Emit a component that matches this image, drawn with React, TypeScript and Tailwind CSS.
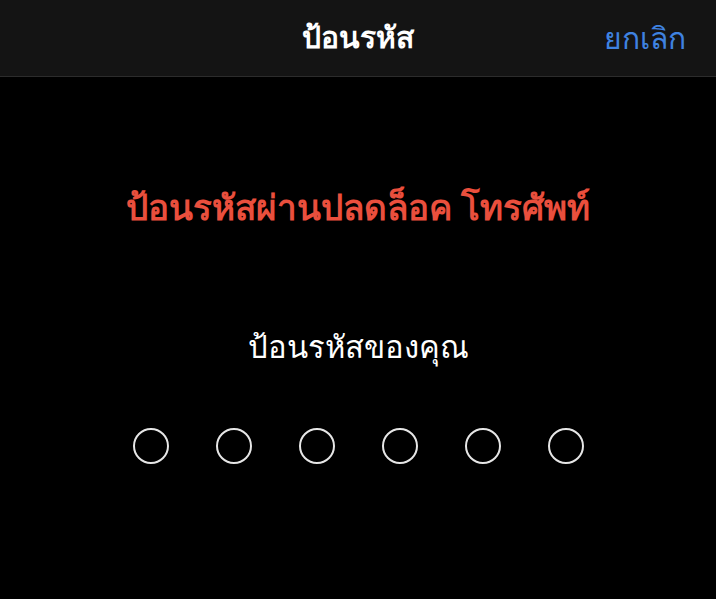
import React from 'react';

const App = () => {
  const dots = [0, 1, 2, 3, 4, 5];

  return (
    <div className="w-[716px] h-[599px] bg-black flex flex-col font-['Noto_Sans',sans-serif]">
      {/* Nav bar */}
      <header className="relative h-[77px] shrink-0 bg-[#141414] border-b border-[#2c2c2c] flex items-center justify-center">
        <h1 className="text-white text-[30px] font-bold leading-none -mt-[2px]">ป้อนรหัส</h1>
        <button
          type="button"
          className="absolute right-[30px] top-1/2 -translate-y-1/2 text-[#3f82e0] text-[30px] leading-none"
        >
          ยกเลิก
        </button>
      </header>

      <main className="flex flex-col items-center">
        <p className="mt-[112px] text-[#ea4f3d] text-[35px] font-bold leading-none">
          ป้อนรหัสผ่านปลดล็อค โทรศัพท์
        </p>
        <p className="mt-[107px] text-white text-[31px] leading-none">ป้อนรหัสของคุณ</p>
        <div className="mt-[66px] flex gap-[47px]">
          {dots.map((d) => (
            <span key={d} className="w-[36px] h-[36px] rounded-full border-2 border-[#e6e6e6]" />
          ))}
        </div>
      </main>
    </div>
  );
};

export default App;
